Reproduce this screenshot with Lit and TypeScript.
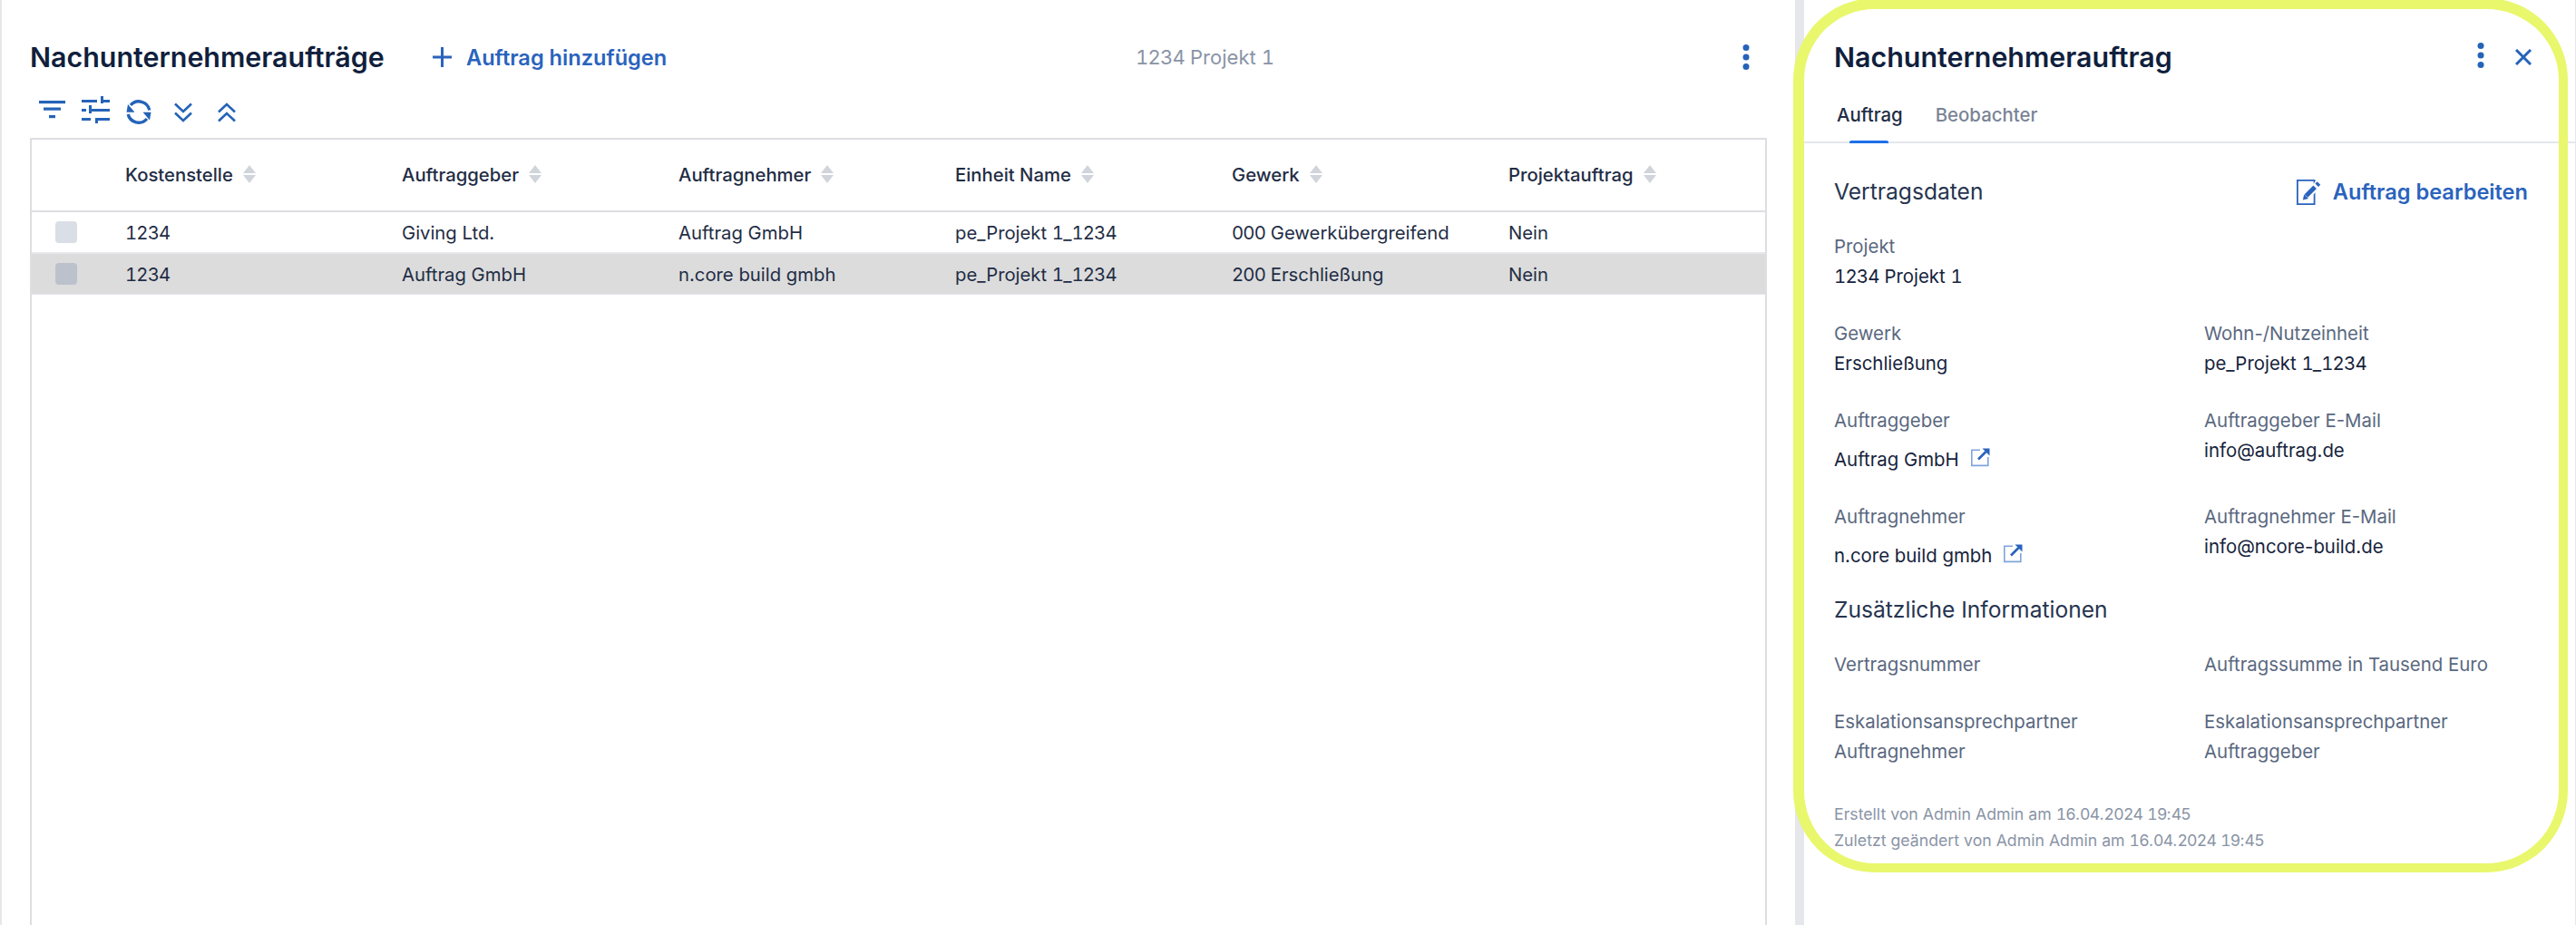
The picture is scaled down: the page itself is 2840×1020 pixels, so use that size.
import { LitElement, html, css } from "lit";
import { customElement } from "lit/decorators.js";

const ext = html`<svg class="ext" viewBox="0 0 22 22" fill="none"><path d="M10 3.2H.8v17.2h18V11" stroke="#7fa4dc" stroke-width="1.6"/><path d="M8 13.5 16.5 5" stroke="#2a63bd" stroke-width="2.6"/><path d="M12.5 1.5H20.5V9.5Z" fill="#2a63bd"/></svg>`;
const kebab = html`<svg class="kebab" viewBox="0 0 8 28" fill="#2563b8"><circle cx="4" cy="3.5" r="3.5"/><circle cx="4" cy="14" r="3.5"/><circle cx="4" cy="24.5" r="3.5"/></svg>`;
const rows = [
  ["1234", "Giving Ltd.", "Auftrag GmbH", "pe_Projekt 1_1234", "000 Gewerkübergreifend", "Nein"],
  ["1234", "Auftrag GmbH", "n.core build gmbh", "pe_Projekt 1_1234", "200 Erschließung", "Nein"],
];
const heads = ["Kostenstelle", "Auftraggeber", "Auftragnehmer", "Einheit Name", "Gewerk", "Projektauftrag"];
const n = (t: string) => t.split(/(\d+)/).map((p, i) => (i % 2 ? html`<span class="n">${p}</span>` : p));

@customElement("app-root")
export class AppRoot extends LitElement {
  static styles = css`
    :host { display: block; width: 2840px; height: 1020px; position: relative; overflow: hidden; background: #fff; font-family: Inter, "Liberation Sans", sans-serif; color: #1f2d45; }
    .n { font-variant-numeric: tabular-nums; letter-spacing: -0.8px; }
    .page { display: flex; height: 1020px; }
    .left { width: 1979px; box-sizing: border-box; padding: 34px 31px 0 31px; border-left: 2px solid #e5e7eb; display: flex; flex-direction: column; }
    .top { height: 58px; display: flex; align-items: center; flex: none; }
    .title { font-size: 30.4px; font-weight: 600; color: #111f3d; width: 444px; flex: none; white-space: nowrap; }
    .add { display: flex; align-items: center; gap: 16px; width: 775px; flex: none; color: #2a63bd; font-size: 23.6px; font-weight: 600; }
    .add svg { width: 21px; height: 22px; }
    .project { color: #8a94a6; font-size: 22px; }
    .kebab { width: 8px; height: 28px; display: block; }
    .top .kebab { margin-left: auto; margin-right: 19px; }
    .tools { height: 34px; margin-top: 14px; flex: none; display: flex; align-items: flex-start; }
    .tools svg { display: block; flex: none; }
    .table { margin-top: 12px; flex: 1; border: 2px solid #dcdee2; border-bottom: none; box-sizing: border-box; font-size: 20.3px; }
    .row { display: grid; grid-template-columns: 103px repeat(6, 305px); align-items: center; box-sizing: border-box; }
    .head { height: 80px; padding-bottom: 2px; border-bottom: 2px solid #dcdee2; font-weight: 500; }
    .body { height: 46px; border-bottom: 2px solid #e5e7eb; }
    .sel { background: #dcdcdc; height: 45px; border-bottom: 1px solid #e5e7eb; }
    .th { display: flex; align-items: center; gap: 11px; }
    .sort { width: 14px; height: 20px; display: block; }
    .cb { width: 24px; height: 24px; border-radius: 4px; background: #d9dee7; margin-left: 26px; }
    .sel .cb { background: #bcc2cc; }
    .split { width: 10px; flex: none; background: #e5e7eb; position: relative; }
    .grip { position: absolute; right: 0; top: 703px; width: 4px; height: 45px; background: #b0b4bc; border-radius: 2px 0 0 2px; }
    .right { flex: 1; padding-top: 34px; display: flex; flex-direction: column; border-right: 1px solid #e5e7eb; }
    .rhead { height: 58px; padding: 0 0 0 33px; display: flex; align-items: center; flex: none; }
    .rtitle { font-size: 30.4px; font-weight: 600; color: #111f3d; white-space: nowrap; }
    .rhead .kebab { margin-left: auto; margin-top: -4px; }
    .close { width: 18px; height: 18px; margin: 0 48px 0 34px; }
    .tabs { height: 66px; box-sizing: border-box; border-bottom: 2px solid #e5e7eb; padding: 0 0 0 36px; display: flex; gap: 36px; flex: none; font-size: 20.4px; font-weight: 500; }
    .tab { height: 66px; box-sizing: border-box; padding-top: 2px; display: flex; align-items: center; position: relative; color: #7a8496; }
    .tab.on { color: #1f2d45; }
    .tab.on::after { content: ""; position: absolute; left: 14px; width: 43px; bottom: 0; height: 3px; background: #1d6fe8; border-radius: 2px 2px 0 0; }
    .body-r { padding: 0 52px 0 33px; }
    .sec { height: 40px; display: flex; align-items: center; justify-content: space-between; font-size: 24.6px; color: #26344e; }
    .sec.first { margin-top: 33px; }
    .sec.next { margin-top: 22px; }
    .edit { display: flex; align-items: center; gap: 12px; font-size: 23.6px; font-weight: 600; color: #2a63bd; margin-top: 1px; }
    .edit svg { width: 28px; height: 28px; display: block; }
    .grid { display: grid; grid-template-columns: 408px 1fr; row-gap: 29px; font-size: 20.4px; line-height: 33.5px; }
    .grid.g1 { margin-top: 23.5px; }
    .grid.g2 { margin-top: 24.5px; }
    .span { grid-column: 1 / span 2; }
    .lb { color: #5a6880; }
    .val { color: #16233c; white-space: nowrap; }
    .link { padding-top: 10px; display: flex; align-items: center; gap: 13px; }
    .ext { width: 22px; height: 22px; display: block; margin-top: -5px; }
    .foot { margin-top: 37px; font-size: 17.7px; line-height: 29px; color: #8a94a6; }
    .mark { position: absolute; left: 1977px; top: -2px; width: 854px; height: 964px; box-sizing: border-box; border: solid #e9f76d; border-width: 12px 10px 10px 12px; border-radius: 90px; pointer-events: none; }
  `;

  private sort() {
    return html`<svg class="sort" viewBox="0 0 14 20" fill="#d1d5db"><path d="M7 0 14 9H0Z"/><path d="M0 11H14L7 20Z"/></svg>`;
  }

  render() {
    const c = "#2563b8";
    return html`<div class="page">
      <section class="left">
        <div class="top">
          <div class="title">Nachunternehmeraufträge</div>
          <div class="add"><svg viewBox="0 0 21 22" fill="none" stroke="#2a63bd" stroke-width="3"><path d="M10.5 0v22M0 11h21"/></svg>Auftrag hinzufügen</div>
          <div class="project">${n("1234 Projekt 1")}</div>
          ${kebab}
        </div>
        <div class="tools">
          <svg width="30" height="34" viewBox="0 0 30 34" style="margin-left:10px" fill="${c}"><rect x="0" y="5" width="29" height="3.2"/><rect x="5" y="12.5" width="19" height="3.2"/><rect x="11" y="21" width="7" height="3.2"/></svg>
          <svg width="31" height="34" viewBox="0 0 31 34" style="margin-left:17px" fill="${c}"><rect x="0" y="4" width="17" height="3"/><rect x="21" y="0" width="3" height="8"/><rect x="24" y="4" width="7" height="3"/><rect x="0" y="14" width="5" height="3"/><rect x="8" y="10" width="3" height="9"/><rect x="11" y="14" width="20" height="3"/><rect x="0" y="24" width="10" height="3"/><rect x="15" y="24" width="3" height="6"/><rect x="15" y="24" width="16" height="3"/></svg>
          <svg width="30" height="30" viewBox="0 0 30 30" style="margin-left:17px;margin-top:3px" fill="none" stroke="${c}" stroke-width="3.4"><path d="M26.8 12.5A12 12 0 0 0 6 7"/><path d="M3.2 17A12 12 0 0 0 24 22"/><path d="M1.5 14.8H10.5L3 6Z" fill="${c}" stroke="none"/><path d="M19.5 14.8H28.5L27 23.5Z" fill="${c}" stroke="none"/></svg>
          <svg width="20" height="22" viewBox="0 0 20 22" style="margin-left:24px;margin-top:7px" fill="none" stroke="${c}" stroke-width="2.6"><path d="M1 1.5 10 10 19 1.5M1 11.5 10 20 19 11.5"/></svg>
          <svg width="20" height="22" viewBox="0 0 20 22" style="margin-left:28px;margin-top:7px" fill="none" stroke="${c}" stroke-width="2.6"><path d="M1 10.5 10 2 19 10.5M1 20.5 10 12 19 20.5"/></svg>
        </div>
        <div class="table">
          <div class="row head"><div></div>${heads.map((h) => html`<div class="th">${h}${this.sort()}</div>`)}</div>
          ${rows.map((r, i) => html`<div class="row ${i === 1 ? "sel" : "body"}"><div class="cb"></div>${r.map((v) => html`<div>${n(v)}</div>`)}</div>`)}
        </div>
      </section>
      <div class="split"><div class="grip"></div></div>
      <aside class="right">
        <div class="rhead">
          <div class="rtitle">Nachunternehmerauftrag</div>
          ${kebab}
          <svg class="close" viewBox="0 0 18 18" fill="none" stroke="${c}" stroke-width="3"><path d="M1 1 17 17M17 1 1 17"/></svg>
        </div>
        <div class="tabs"><div class="tab on">Auftrag</div><div class="tab">Beobachter</div></div>
        <div class="body-r">
          <div class="sec first">Vertragsdaten
            <div class="edit"><svg viewBox="0 0 28 28" fill="none"><path d="M.9.9H19.6V27.1H.9Z" stroke="#2a63bd" stroke-width="1.8"/><path d="M10.5 18.5 24 5" stroke="#fff" stroke-width="8.5"/><path d="M10.5 18 20.2 8.3" stroke="#2a63bd" stroke-width="5"/><path d="M22.2 6.3 24.5 4" stroke="#2a63bd" stroke-width="5"/><path d="M6.8 22.5 8.3 16.3 13 21Z" fill="#2a63bd"/></svg>Auftrag bearbeiten</div>
          </div>
          <div class="grid g1">
            <div class="span"><div class="lb">Projekt</div><div class="val">${n("1234 Projekt 1")}</div></div>
            <div><div class="lb">Gewerk</div><div class="val">Erschließung</div></div>
            <div><div class="lb">Wohn-/Nutzeinheit</div><div class="val">${n("pe_Projekt 1_1234")}</div></div>
            <div><div class="lb">Auftraggeber</div><div class="val link">Auftrag GmbH ${ext}</div></div>
            <div><div class="lb">Auftraggeber E-Mail</div><div class="val">info@auftrag.de</div></div>
            <div><div class="lb">Auftragnehmer</div><div class="val link">n.core build gmbh ${ext}</div></div>
            <div><div class="lb">Auftragnehmer E-Mail</div><div class="val">info@ncore-build.de</div></div>
          </div>
          <div class="sec next">Zusätzliche Informationen</div>
          <div class="grid g2">
            <div class="lb">Vertragsnummer</div>
            <div class="lb">Auftragssumme in Tausend Euro</div>
            <div><div class="lb">Eskalationsansprechpartner</div><div class="lb">Auftragnehmer</div></div>
            <div><div class="lb">Eskalationsansprechpartner</div><div class="lb">Auftraggeber</div></div>
          </div>
          <div class="foot">${n("Erstellt von Admin Admin am 16.04.2024 19:45")}<br />${n("Zuletzt geändert von Admin Admin am 16.04.2024 19:45")}</div>
        </div>
      </aside>
    </div>
    <div class="mark"></div>`;
  }
}
